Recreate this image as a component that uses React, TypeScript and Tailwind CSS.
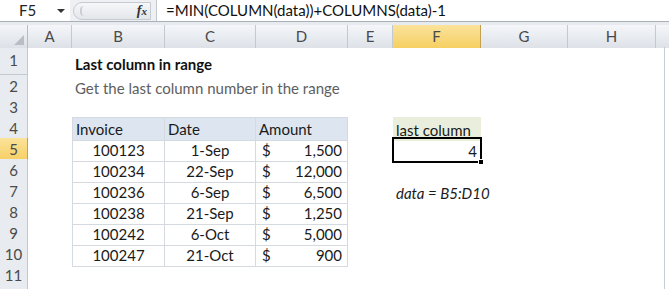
import React from "react";

const COLS =
  "grid grid-cols-[28px_44px_93px_91px_92px_45px_88px_87px_88px_13px]";

const font = "font-['Lato','Open_Sans',sans-serif]";

const letters = ["A", "B", "C", "D", "E", "F", "G", "H"];

type Cell = {
  text?: React.ReactNode;
  align?: "left" | "center" | "right";
  cls?: string;
};

const tb = "border-r border-b border-[#d5dae1]";

const rows: { h: string; cells: Record<string, Cell> }[] = [
  {
    h: "h-[28px]",
    cells: {
      B: { text: "Last column in range", cls: "font-bold text-[#111] whitespace-nowrap overflow-visible" },
    },
  },
  {
    h: "h-[21px]",
    cells: {
      B: { text: "Get the last column number in the range", cls: "text-[#5e5e5e] whitespace-nowrap overflow-visible" },
    },
  },
  { h: "h-[21px]", cells: {} },
  {
    h: "h-[21px]",
    cells: {
      B: { text: "Invoice", cls: `bg-[#dce5f0] border-t border-l ${tb}` },
      C: { text: "Date", cls: `bg-[#dce5f0] border-t ${tb}` },
      D: { text: "Amount", cls: `bg-[#dce5f0] border-t ${tb}` },
      F: { text: "last column", cls: "bg-[#eaefdd]" },
    },
  },
];

const data = [
  ["100123", "1-Sep", "1,500"],
  ["100234", "22-Sep", "12,000"],
  ["100236", "6-Sep", "6,500"],
  ["100238", "21-Sep", "1,250"],
  ["100242", "6-Oct", "5,000"],
  ["100247", "21-Oct", "900"],
];

data.forEach(([inv, date, amt], i) => {
  const cells: Record<string, Cell> = {
    B: { text: inv, align: "center", cls: `border-l ${tb}` },
    C: { text: date, align: "center", cls: tb },
    D: {
      text: (
        <span className="flex w-full justify-between pl-[3px] pr-[2px]">
          <span>$</span>
          <span>{amt}</span>
        </span>
      ),
      cls: tb,
    },
  };
  if (i === 0) {
    cells.F = {
      text: (
        <>
          <span className="ml-auto pr-[1px]">4</span>
          <span className="absolute -left-[1px] -top-[1px] -right-[1px] -bottom-[1px] border-2 border-black" />
          <span className="absolute -right-[3px] -bottom-[3px] h-[6px] w-[6px] border border-white bg-black" />
        </>
      ),
      cls: "relative",
    };
  }
  if (i === 2) {
    cells.F = { text: "data = B5:D10", cls: "italic whitespace-nowrap overflow-visible" };
  }
  rows.push({ h: "h-[21px]", cells });
});

rows.push({ h: "h-[21px]", cells: {} });
rows.push({ h: "h-[21px]", cells: {} });

function FormulaBar() {
  return (
    <div className="flex h-[22px] border-b border-[#a9b0b9] bg-[#eef0f3]">
      <div className="flex w-[70px] items-center bg-white pl-[19px] text-[15px] text-[#222]">
        <span>F5</span>
        <span className="ml-[21px] mt-[1px] h-0 w-0 border-x-[4px] border-t-[4px] border-x-transparent border-t-[#333]" />
      </div>
      <div className="flex w-[86px] items-center pl-[3px] pr-[5px]">
        <div className="relative flex h-[18px] flex-1 items-center rounded-l-full border border-[#c6cbd2] bg-gradient-to-b from-[#f6f7f9] to-[#e3e6ea] pl-[6px]">
          <span className="h-[10px] w-[8px] rounded-full border-l-2 border-[#c9ced5]" />
          <span className="ml-auto pr-[3px] font-['Liberation_Serif',serif] text-[14px] font-bold italic leading-none text-[#333]">
            f<span className="text-[11px]">x</span>
          </span>
        </div>
      </div>
      <div className="flex flex-1 items-center border-l border-[#c4c9d0] bg-white pl-[9px] text-[15px] text-[#111]">
        =MIN(COLUMN(data))+COLUMNS(data)-1
      </div>
    </div>
  );
}

function ColumnHeader() {
  return (
    <div className={`${COLS} h-[22px] border-b border-[#9ea6b0]`}>
      <div className="relative border-r border-[#b6bdc6] bg-gradient-to-b from-[#f3f5f8] to-[#dde1e7]">
        <span className="absolute bottom-[3px] right-[3px] h-0 w-0 border-b-[10px] border-l-[10px] border-l-transparent border-b-[#b9bec6]" />
      </div>
      {letters.map((l) => (
        <div
          key={l}
          className={
            l === "F"
              ? "flex items-center justify-center border-r border-[#c3a24f] bg-gradient-to-b from-[#fbe39a] to-[#f6cf62] text-[15px] text-[#4a4a4a]"
              : "flex items-center justify-center border-r border-[#c3c9d1] bg-gradient-to-b from-[#f4f6f9] to-[#dee2e8] text-[15px] text-[#4a4a4a]"
          }
        >
          {l}
        </div>
      ))}
      <div className="bg-gradient-to-b from-[#f4f6f9] to-[#dee2e8]" />
    </div>
  );
}

export default function App() {
  return (
    <div className={`h-[289px] w-[669px] overflow-hidden bg-white ${font}`}>
      <FormulaBar />
      <div className="h-[3px] bg-[#e7eaee]" />
      <ColumnHeader />
      {rows.map((r, i) => (
        <div key={i} className={`${COLS} ${r.h}`}>
          <div
            className={
              i === 4
                ? "flex items-center justify-center border-r border-b border-[#c9a23f] bg-gradient-to-b from-[#fbe39a] to-[#f6cf62] text-[15px] text-[#4a4a4a]"
                : "flex items-center justify-center border-r border-b border-[#c3c9d1] bg-[#e8ebef] text-[15px] text-[#4a4a4a]"
            }
          >
            {i + 1}
          </div>
          {letters.map((l) => {
            const c = r.cells[l];
            if (!c) return <div key={l} />;
            const j =
              c.align === "center"
                ? "justify-center"
                : c.align === "right"
                  ? "justify-end"
                  : "justify-start";
            return (
              <div
                key={l}
                className={`flex items-end pb-[1px] pl-[3px] pr-[3px] text-[15px] leading-[19px] text-[#1a1a1a] ${j} ${c.cls ?? ""}`}
              >
                {c.text}
              </div>
            );
          })}
          <div className="pl-[8px]">
            <div className="h-full border-l border-[#c8cdd4]" />
          </div>
        </div>
      ))}
    </div>
  );
}
